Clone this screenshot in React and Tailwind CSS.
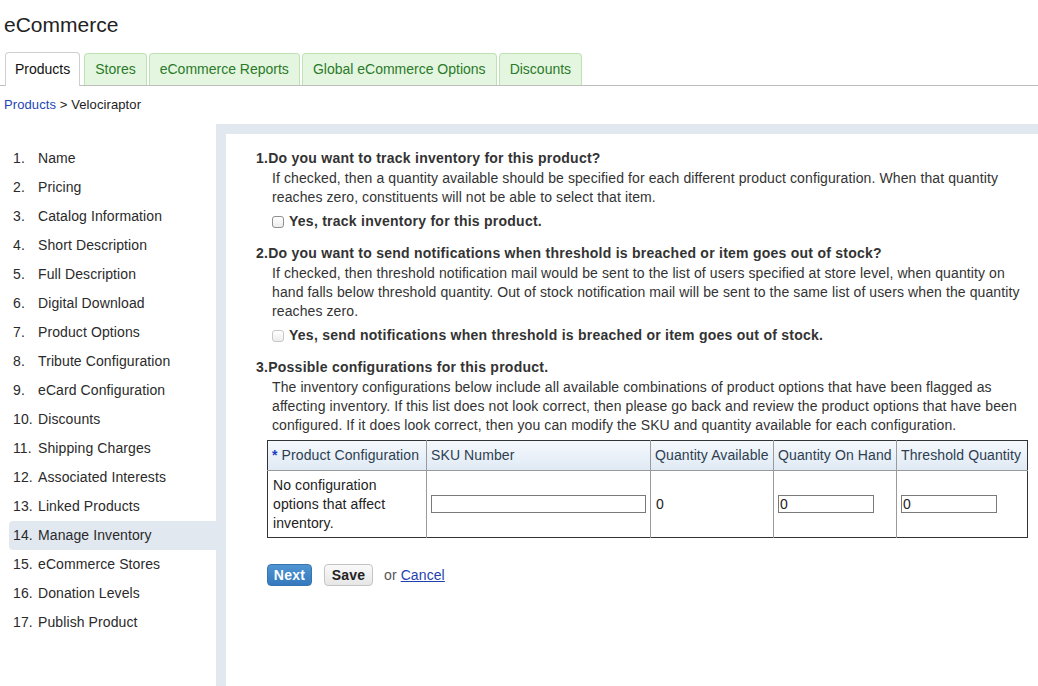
import React from "react";

const tabs = [
    { label: "Products", active: true },
    { label: "Stores" },
    { label: "eCommerce Reports" },
    { label: "Global eCommerce Options" },
    { label: "Discounts" },
];

const steps = [
    "Name",
    "Pricing",
    "Catalog Information",
    "Short Description",
    "Full Description",
    "Digital Download",
    "Product Options",
    "Tribute Configuration",
    "eCard Configuration",
    "Discounts",
    "Shipping Charges",
    "Associated Interests",
    "Linked Products",
    "Manage Inventory",
    "eCommerce Stores",
    "Donation Levels",
    "Publish Product",
];

const Checkbox = ({ disabled }) => (
    <span
        className={
            "inline-block w-[12px] h-[12px] rounded-[3px] border bg-gradient-to-b from-white to-[#ececec] " +
            (disabled ? "border-[#c8c8c8]" : "border-[#8f8f8f]")
        }
    />
);

const Question = ({ title, lines, check, disabled, className = "" }) => (
    <div className={className}>
        <div className="font-bold leading-[19px] tracking-[0.25px]">{title}</div>
        <div className="pl-[16px] mt-[1px] leading-[19px] whitespace-nowrap">
            {lines.map((l, i) => (
                <div key={i}>{l}</div>
            ))}
        </div>
        {check && (
            <label className="flex items-center gap-[5px] pl-[16px] mt-[5px] leading-[19px] font-bold tracking-[0.25px]">
                <Checkbox disabled={disabled} />
                <span>{check}</span>
            </label>
        )}
    </div>
);

const TextBox = ({ width, value }) => (
    <div
        className={`${width} h-[18px] border border-[#7a7a7a] bg-white text-[14px] leading-[16px] pl-[1px]`}
    >
        {value}
    </div>
);

export default function App() {
    return (
        <div
            className="w-[1038px] h-[686px] overflow-hidden bg-white text-[#333] text-[14px] tracking-[0.1px]"
            style={{ fontFamily: '"Liberation Sans", Arial, sans-serif' }}
        >
            {/* Header */}
            <h1 className="pt-[13px] pl-[4px] text-[21px] leading-[24px] text-[#222] tracking-normal">eCommerce</h1>

            {/* Tabs */}
            <div className="mt-[16px] flex items-end pl-[5px] border-b border-[#bdbdbd] h-[33px] tracking-normal">
                {tabs.map((t) =>
                    t.active ? (
                        <div
                            key={t.label}
                            className="mr-[4px] h-[34px] -mb-[1px] px-[9px] flex items-center rounded-t-[4px] border border-b-0 border-[#cfcfcf] bg-white text-[#111]"
                        >
                            {t.label}
                        </div>
                    ) : (
                        <div
                            key={t.label}
                            className="mr-[2px] h-[32px] px-[10px] flex items-center rounded-t-[4px] border border-b-0 border-[#bfe2b5] bg-[#e4f6df] text-[#2b7a2b]"
                        >
                            {t.label}
                        </div>
                    )
                )}
            </div>

            {/* Breadcrumb */}
            <div className="mt-[11px] pl-[4px] text-[13px] leading-[16px] text-[#222]">
                <a className="text-[#2446b4]">Products</a> &gt; Velociraptor
            </div>

            {/* Main */}
            <div className="mt-[11px] flex h-[562px]">
                <ul className="w-[217px] pt-[20px] pl-[9px]">
                    {steps.map((s, i) => (
                        <li
                            key={s}
                            className={
                                "h-[29px] leading-[29px] pl-[4px] flex text-[#2a2a2a] rounded-l-[4px] " +
                                (i === 13 ? "bg-[#e1e8f0]" : "")
                            }
                        >
                            <span className="w-[25px]">{i + 1}.</span>
                            <span>{s}</span>
                        </li>
                    ))}
                </ul>

                <div className="flex-1 bg-[#e1e8f0] pl-[10px] pt-[10px]">
                    <div className="h-full bg-white pl-[30px] pr-[10px] pt-[15px]">
                        <Question
                            title="1.Do you want to track inventory for this product?"
                            lines={[
                                "If checked, then a quantity available should be specified for each different product configuration. When that quantity",
                                "reaches zero, constituents will not be able to select that item.",
                            ]}
                            check="Yes, track inventory for this product."
                        />
                        <Question
                            className="mt-[13px]"
                            title="2.Do you want to send notifications when threshold is breached or item goes out of stock?"
                            lines={[
                                "If checked, then threshold notification mail would be sent to the list of users specified at store level, when quantity on",
                                "hand falls below threshold quantity. Out of stock notification mail will be sent to the same list of users when the quantity",
                                "reaches zero.",
                            ]}
                            check="Yes, send notifications when threshold is breached or item goes out of stock."
                            disabled
                        />
                        <Question
                            className="mt-[13px]"
                            title="3.Possible configurations for this product."
                            lines={[
                                "The inventory configurations below include all available combinations of product options that have been flagged as",
                                "affecting inventory. If this list does not look correct, then please go back and review the product options that have been",
                                "configured. If it does look correct, then you can modify the SKU and quantity available for each configuration.",
                            ]}
                        />

                        {/* Inventory table */}
                        <div className="ml-[11px] mt-[5px]">
                            <table className="w-[760px] table-fixed border-collapse border border-[#333]">
                                <colgroup>
                                    <col className="w-[159px]" />
                                    <col className="w-[224px]" />
                                    <col className="w-[123px]" />
                                    <col className="w-[123px]" />
                                    <col className="w-[131px]" />
                                </colgroup>
                                <thead>
                                    <tr className="h-[30px] bg-gradient-to-b from-[#f5f9fd] to-[#dfe9f4] text-[#2d3e50]">
                                        <th className="font-normal text-left px-[4px] border-r border-[#9a9a9a] whitespace-nowrap">
                                            <span className="text-[#1c3fc0] font-bold align-top">*</span> Product Configuration
                                        </th>
                                        <th className="font-normal text-left px-[4px] border-r border-[#9a9a9a]">SKU Number</th>
                                        <th className="font-normal text-left px-[4px] border-r border-[#9a9a9a] whitespace-nowrap">Quantity Available</th>
                                        <th className="font-normal text-left px-[4px] border-r border-[#9a9a9a] whitespace-nowrap">Quantity On Hand</th>
                                        <th className="font-normal text-left px-[4px] whitespace-nowrap">Threshold Quantity</th>
                                    </tr>
                                </thead>
                                <tbody>
                                    <tr className="h-[67px] border-t border-[#9a9a9a] text-[#222]">
                                        <td className="px-[5px] leading-[19px] border-r border-[#9a9a9a]">
                                            No configuration options that affect inventory.
                                        </td>
                                        <td className="px-[4px] border-r border-[#9a9a9a]">
                                            <TextBox width="w-[215px]" value="" />
                                        </td>
                                        <td className="px-[5px] border-r border-[#9a9a9a]">0</td>
                                        <td className="px-[4px] border-r border-[#9a9a9a]">
                                            <TextBox width="w-[96px]" value="0" />
                                        </td>
                                        <td className="px-[4px]">
                                            <TextBox width="w-[96px]" value="0" />
                                        </td>
                                    </tr>
                                </tbody>
                            </table>
                        </div>

                        {/* Actions */}
                        <div className="ml-[11px] mt-[26px] flex items-center">
                            <button className="h-[22px] w-[45px] rounded-[4px] bg-gradient-to-b from-[#4f95d3] to-[#3479bd] border border-[#3a74ad] text-white font-bold text-[14px] tracking-[0.25px]">
                                Next
                            </button>
                            <button className="ml-[12px] h-[22px] w-[49px] rounded-[4px] bg-gradient-to-b from-[#fafafa] to-[#e6e6e6] border border-[#c4c4c4] text-[#222] font-bold text-[14px] tracking-[0.25px]">
                                Save
                            </button>
                            <span className="ml-[11px] text-[#555]">or</span>
                            <a className="ml-[4px] text-[#1f3fae] underline">Cancel</a>
                        </div>
                    </div>
                </div>
            </div>
        </div>
    );
}
